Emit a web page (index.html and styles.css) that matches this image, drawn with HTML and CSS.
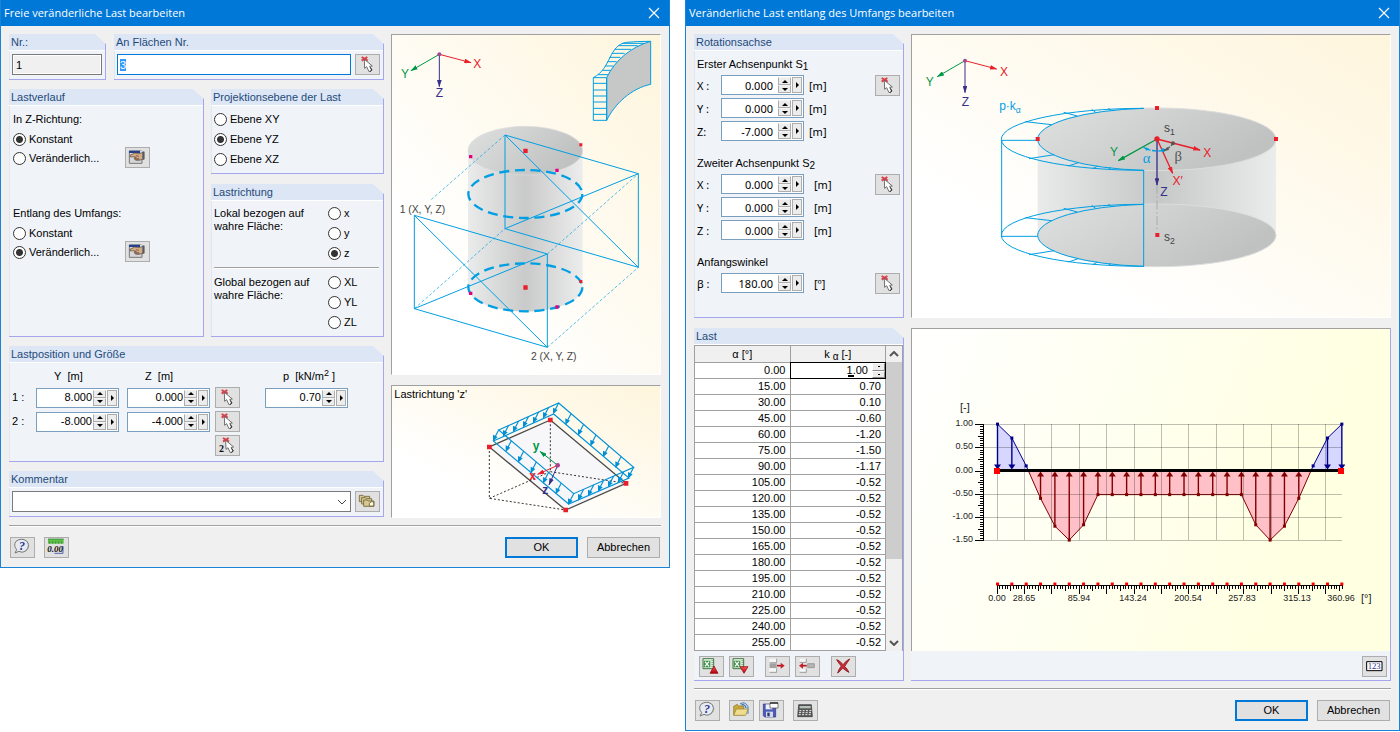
FILE: index.html
```html
<!DOCTYPE html>
<html lang="de">
<head>
<meta charset="utf-8">
<title>Lasten bearbeiten</title>
<link rel="stylesheet" href="styles.css">
</head>
<body>
<svg class="defs" aria-hidden="true">
  <defs>
    <marker id="m-red" viewBox="0 0 22 14" markerWidth="22" markerHeight="14" refX="20" refY="7" orient="auto" markerUnits="userSpaceOnUse"><path d="M0 0L22 7L0 14z" fill="#e8202a"/></marker>
    <marker id="m-green" viewBox="0 0 22 14" markerWidth="22" markerHeight="14" refX="20" refY="7" orient="auto" markerUnits="userSpaceOnUse"><path d="M0 0L22 7L0 14z" fill="#009846"/></marker>
    <marker id="m-navy" viewBox="0 0 22 14" markerWidth="22" markerHeight="14" refX="20" refY="7" orient="auto" markerUnits="userSpaceOnUse"><path d="M0 0L22 7L0 14z" fill="#36308b"/></marker>
    <marker id="m-gray" viewBox="0 0 22 14" markerWidth="16" markerHeight="12" refX="20" refY="7" orient="auto" markerUnits="userSpaceOnUse"><path d="M0 0L22 7L0 14z" fill="#555"/></marker>
    <marker id="m-blue" viewBox="0 0 22 14" markerWidth="16" markerHeight="12" refX="20" refY="7" orient="auto" markerUnits="userSpaceOnUse"><path d="M0 0L22 7L0 14z" fill="#009fe3"/></marker>
    <linearGradient id="g-body"><stop offset="0" stop-color="#e9eaea"/><stop offset=".5" stop-color="#c6c7c7"/><stop offset="1" stop-color="#ebecec"/></linearGradient>
    <linearGradient id="g-cap" x1="0" y1="0" x2="1" y2=".4"><stop offset="0" stop-color="#dfe0e0"/><stop offset="1" stop-color="#c0c1c1"/></linearGradient>
    <linearGradient id="g-red" x1="0" y1="0" x2="0" y2="1"><stop offset="0" stop-color="#f55"/><stop offset="1" stop-color="#b00010"/></linearGradient>

    <symbol id="i-pick" viewBox="0 0 75 63">
      <path d="M20 9L38 20M20 20L37 9" stroke="#d8404a" stroke-width="6"/>
      <path d="M28 16L29 43L35 38L42 53L50 49L44 37L52 36z" fill="#fff" stroke="#555" stroke-width="2.5"/>
      <path d="M46 40L51 48L45 53" fill="none" stroke="#333" stroke-width="3"/>
    </symbol>
    <symbol id="i-hand" viewBox="0 0 75 63">
      <path d="M13 12H51V49H13z" fill="#d4d6da" stroke="#777" stroke-width="3"/>
      <path d="M12 11H45V18H12z" fill="#27408b"/><path d="M45 11H52V18H45z" fill="#d8dde8"/>
      <path d="M15 25L29 18L42 20L57 15V36L46 39L31 39L27 33L34 31L27 29L16 30z" fill="#d3ab84" stroke="#5c4330" stroke-width="2"/>
      <path d="M29 35H42M32 39H44M33 26L42 28" stroke="#5c4330" stroke-width="2"/>
      <path d="M52 15L58 13V38L52 37z" fill="#555b66"/>
    </symbol>
    <symbol id="i-cards" viewBox="0 0 75 63" fill="#d6c896" stroke="#6f6334" stroke-width="2.5">
      <path d="M13 13H24L27 16H44V32H13z"/><path d="M20 20H31L34 23H50V39H20z"/><path d="M26 27H37L40 30H57V46H26z"/>
      <path d="M43 45V37L50 32L56 33V45z" fill="#fffbe6"/>
    </symbol>
    <symbol id="i-help" viewBox="0 0 75 63">
      <path d="M18 13Q34 1 50 12Q60 24 51 37Q40 50 27 43L15 48L20 38Q9 25 18 13z" fill="#e6eaf2" stroke="#777" stroke-width="3"/>
      <path d="M55 19Q60 33 46 43" fill="none" stroke="#999" stroke-width="3"/>
      <text x="27" y="40" class="icon-q">?</text>
    </symbol>
    <symbol id="i-units" viewBox="0 0 75 63">
      <path d="M12 6H59V20H12z" fill="#5cbf4a"/><path d="M12 6H59" stroke="#347a2b" stroke-width="2"/>
      <path d="M17 20V14M26 20V14M35 20V14M44 20V14M53 20V14" stroke="#2b6b22" stroke-width="2"/>
      <path d="M31 49H57V27" fill="none" stroke="#5664a8" stroke-width="3"/>
      <text x="10" y="45" class="icon-num">0.00</text>
    </symbol>
    <symbol id="i-xls" viewBox="0 0 75 63">
      <path d="M12 8H44V38H12z" fill="#eaf6e6" stroke="#3d7a43" stroke-width="3"/>
      <path d="M14 14H34V34H14z" fill="#3d8f4b"/><path d="M18 17L30 31M30 17L18 31" stroke="#fff" stroke-width="4"/>
      <path d="M37 14H43M37 20H43M37 26H43M37 32H43" stroke="#3d7a43" stroke-width="2"/>
    </symbol>
    <symbol id="i-xls-up" viewBox="0 0 75 63"><use href="#i-xls" width="75" height="63"/><path d="M45 30L57 52H33z" fill="url(#g-red)" stroke="#8b0000" stroke-width="2"/></symbol>
    <symbol id="i-xls-down" viewBox="0 0 75 63"><use href="#i-xls" width="75" height="63"/><path d="M45 52L57 32H33z" fill="url(#g-red)" stroke="#8b0000" stroke-width="2"/></symbol>
    <symbol id="i-row-in" viewBox="0 0 75 63">
      <path d="M13 8H35V21H13zM13 37H35V49H13z" fill="#f6f6f6"/><path d="M35 8V20H14M35 37V49H14" fill="none" stroke="#777" stroke-width="2"/>
      <path d="M14 22H35V36H14z" fill="#a2a2a2"/><path d="M36 29H49" stroke="#b8141c" stroke-width="5"/><path d="M47 20L59 29L47 38z" fill="#c4202a"/>
    </symbol>
    <symbol id="i-row-out" viewBox="0 0 75 63">
      <path d="M14 8H34V19H14zM14 38H34V49H14z" fill="#f6f6f6"/><path d="M34 8V19H14M34 38V49H14" fill="none" stroke="#777" stroke-width="2"/>
      <path d="M38 23H58V35H38z" fill="#b4b4b4" stroke="#888" stroke-width="2"/><path d="M22 29H35" stroke="#b8141c" stroke-width="5"/><path d="M24 20L12 29L24 38z" fill="#c4202a"/>
    </symbol>
    <symbol id="i-delete" viewBox="0 0 75 63"><path d="M17 11Q25 12 36 26Q46 13 56 9Q50 18 41 31Q49 39 54 49Q43 44 35 36Q28 45 20 51Q23 40 31 30Q23 22 17 11z" fill="#cf2a33" stroke="#8f2027" stroke-width="3"/></symbol>
    <symbol id="i-open" viewBox="0 0 75 63">
      <path d="M33 12Q48 2 57 20V42" fill="#c6dcf2" stroke="#4a78ad" stroke-width="3"/><path d="M37 15Q48 11 51 24" fill="none" stroke="#24558c" stroke-width="3"/>
      <path d="M14 19L25 13L29 18H44V45H14z" fill="#c9a93a" stroke="#8a7526" stroke-width="2"/><path d="M14 46L22 27H57L50 46z" fill="#f0dd8c" stroke="#94802c" stroke-width="2"/>
    </symbol>
    <symbol id="i-save" viewBox="0 0 75 63">
      <path d="M13 12H50V51H17L13 47z" fill="#4d5bb8" stroke="#28347f" stroke-width="2"/><path d="M20 13H40V28H20z" fill="#eef1fa"/><path d="M21 35H42V51H21z" fill="#d5d8e2"/><path d="M25 38H32V49H25z" fill="#28347f"/>
      <path d="M33 9H57V24H33z" fill="#fff" stroke="#444" stroke-width="2"/><path d="M33 9H57" stroke="#222" stroke-width="4"/>
    </symbol>
    <symbol id="i-calc" viewBox="0 0 75 63">
      <path d="M17 14H55L58 50H14z" fill="#555" stroke="#333" stroke-width="2"/><path d="M20 18H53V25H20z" fill="#b5c2b7"/>
      <path d="M19 32H55M18 38H55M17 44H56" stroke="#eee" stroke-width="3" stroke-dasharray="6 4"/>
    </symbol>
    <symbol id="i-123" viewBox="0 0 75 63"><path d="M14 17H60V44H14z" fill="#fff" stroke="#000" stroke-width="3"/><text x="17" y="40" class="icon-123">123</text></symbol>
    <symbol id="i-close" viewBox="0 0 12 12"><path d="M1 1L11 11M11 1L1 11" stroke="#fff" stroke-width="1.2"/></symbol>
    <g id="press"><path d="M0 0L-14 27" fill="none" stroke="#0091d5" stroke-width="3.5"/><path d="M-17 34L-17 14L-3 21z" fill="#0091d5"/></g>
  </defs>
</svg>

<main class="desk">
<section class="dialog" aria-labelledby="t1">
  <header class="titlebar"><h1 id="t1">Freie veränderliche Last bearbeiten</h1><button class="close" aria-label="Schließen"><svg><use href="#i-close"/></svg></button></header>
  <div class="content">
    <div class="cols cols-a">
      <div class="stack forms">
        <div class="row-nr">
          <section class="group"><h2><label for="nr">Nr.:</label></h2><div class="body line"><input id="nr" class="text readonly" value="1" readonly></div></section>
          <section class="group"><h2><label for="faces">An Flächen Nr.</label></h2><div class="body line"><input id="faces" class="text focus" value="3"><button class="tool" aria-label="Flächen wählen"><svg><use href="#i-pick"/></svg></button></div></section>
        </div>
        <div class="row-mid">
          <section class="group"><h2>Lastverlauf</h2>
            <div class="body course">
              <div class="choice">
                <p>In Z-Richtung:</p>
                <div class="radios"><label><input type="radio" name="zr" checked>Konstant</label><label><input type="radio" name="zr">Veränderlich...</label></div>
                <button class="tool" aria-label="Verlauf in Z bearbeiten"><svg><use href="#i-hand"/></svg></button>
              </div>
              <div class="choice">
                <p>Entlang des Umfangs:</p>
                <div class="radios"><label><input type="radio" name="um">Konstant</label><label><input type="radio" name="um" checked>Veränderlich...</label></div>
                <button class="tool" aria-label="Verlauf am Umfang bearbeiten"><svg><use href="#i-hand"/></svg></button>
              </div>
            </div>
          </section>
          <div class="stack">
            <section class="group"><h2>Projektionsebene der Last</h2>
              <div class="body radios plane"><label><input type="radio" name="eb">Ebene XY</label><label><input type="radio" name="eb" checked>Ebene YZ</label><label><input type="radio" name="eb">Ebene XZ</label></div>
            </section>
            <section class="group"><h2>Lastrichtung</h2>
              <div class="body direction">
                <p>Lokal bezogen auf<br>wahre Fläche:</p>
                <div class="radios plane"><label><input type="radio" name="ri">x</label><label><input type="radio" name="ri">y</label><label><input type="radio" name="ri" checked>z</label></div>
                <hr>
                <p>Global bezogen auf<br>wahre Fläche:</p>
                <div class="radios plane"><label><input type="radio" name="ri">XL</label><label><input type="radio" name="ri">YL</label><label><input type="radio" name="ri">ZL</label></div>
              </div>
            </section>
          </div>
        </div>
        <section class="group"><h2>Lastposition und Größe</h2>
          <div class="body position">
            <span></span><span class="unit-y">Y&nbsp; [m]</span><span class="unit-y">Z&nbsp; [m]</span><span></span><span class="unit-y">p&nbsp; [kN/m<sup>2</sup> ]</span>
            <span>1 :</span>
            <div class="num"><input aria-label="Y 1" value="8.000"><span class="spin"><button aria-label="mehr"></button><button aria-label="weniger"></button></span><button class="more" aria-label="Auswahl"></button></div>
            <div class="num"><input aria-label="Z 1" value="0.000"><span class="spin"><button aria-label="mehr"></button><button aria-label="weniger"></button></span><button class="more" aria-label="Auswahl"></button></div>
            <button class="tool" aria-label="Punkt 1 wählen"><svg><use href="#i-pick"/></svg></button>
            <div class="num"><input aria-label="p" value="0.70"><span class="spin"><button aria-label="mehr"></button><button aria-label="weniger"></button></span><button class="more" aria-label="Auswahl"></button></div>
            <span>2 :</span>
            <div class="num"><input aria-label="Y 2" value="-8.000"><span class="spin"><button aria-label="mehr"></button><button aria-label="weniger"></button></span><button class="more" aria-label="Auswahl"></button></div>
            <div class="num"><input aria-label="Z 2" value="-4.000"><span class="spin"><button aria-label="mehr"></button><button aria-label="weniger"></button></span><button class="more" aria-label="Auswahl"></button></div>
            <button class="tool" aria-label="Punkt 2 wählen"><svg><use href="#i-pick"/></svg></button>
            <span></span>
            <button class="tool both" aria-label="Zwei Punkte wählen"><svg viewBox="0 0 75 63"><text x="12" y="51" class="icon-two">2</text><use href="#i-pick" x="4" width="75" height="63"/></svg></button>
          </div>
        </section>
        <section class="group"><h2><label for="note">Kommentar</label></h2>
          <div class="body line"><select id="note" class="text combo"><option></option></select><button class="tool" aria-label="Kommentar wählen"><svg><use href="#i-cards"/></svg></button></div>
        </section>
      </div>
      <div class="stack">
        <svg class="picture" viewBox="21 15 804 1017" role="img" aria-label="Zylinder mit Projektionsebenen">
          <g class="axes">
            <path d="M163 73L258 98" stroke="#e8202a" marker-end="url(#m-red)"/><path d="M163 73L78 122" stroke="#009846" marker-end="url(#m-green)"/><path d="M163 73V170" stroke="#36308b" marker-end="url(#m-navy)"/>
            <circle cx="163" cy="73" r="6" fill="#a8468c"/>
            <text x="277" y="115" fill="#e8202a">X</text><text x="60" y="144" fill="#009846">Y</text><text x="163" y="202" fill="#36308b">Z</text>
          </g>
          <path d="M665 143C690 90 740 50 797 34V163C740 175 690 220 665 271z" fill="#c6c7c7"/>
          <path class="blue" d="M625 143H665V271H625zM625 143C680 115 670 45 725 37Q755 34 797 34V163C740 175 690 220 665 271V143C690 90 740 50 797 34M625 160H665M625 180H665M625 198H665M625 216H665M625 235H665M625 253H665M640 134H669M652 121H677M660 108H685M667 95H695M673 82H706M680 70H719M689 58H738M700 47H758M712 40H778"/>
          <path d="M249 362V772A172 73 0 0 0 593 772V362z" fill="url(#g-body)" opacity=".95"/>
          <ellipse cx="421" cy="362" rx="172" ry="73" fill="url(#g-cap)" stroke="#dcdddd" stroke-width="2"/>
          <path class="blue" d="M360 315L760 431V712L360 596zM360 315L760 712M760 431L360 596M88 556L487 672V952L88 836zM88 556L487 952M88 836L487 672"/>
          <path class="blue fine" stroke-dasharray="9 6" d="M360 315L135 512M88 836L360 596M487 672L760 431M487 952L760 712"/>
          <g class="ring"><ellipse cx="421" cy="492" rx="171" ry="72"/><ellipse cx="421" cy="772" rx="171" ry="72"/></g>
          <path d="M415 356h13v13h-13zM583 340h9v9h-9zM415 766h13v13h-13zM583 750h9v9h-9z" fill="#e8202a"/>
          <path d="M252 375h10v10h-10zM511 416h10v10h-10zM252 785h10v10h-10zM511 826h10v10h-10z" fill="#e6007e"/>
          <text class="caption" x="44" y="549">1 (X, Y, Z)</text><text class="caption" x="438" y="990">2 (X, Y, Z)</text>
        </svg>
        <svg class="picture" viewBox="21 33 804 393" role="img" aria-label="Lastrichtung z">
          <text class="label" x="28" y="69">Lastrichtung 'z'</text>
          <path d="M496 135L313 216L542 405L723 325z" fill="#f7f7f9" stroke="#4a4a4a" stroke-width="4"/>
          <path d="M313 216V370L542 405M313 370L496 290V135M496 290L723 325" fill="none" stroke="#333" stroke-width="3" stroke-dasharray="6 6"/>
          <path d="M341 165L521 84L746 277L566 356zM325 198L506 117L732 309L551 387z" fill="none" stroke="#0091d5" stroke-width="3.5"/>
          <use href="#press" x="341" y="165"/><use href="#press" x="371" y="151"/><use href="#press" x="401" y="138"/><use href="#press" x="431" y="124"/><use href="#press" x="461" y="111"/><use href="#press" x="491" y="97"/><use href="#press" x="521" y="84"/>
          <use href="#press" x="558" y="116"/><use href="#press" x="596" y="148"/><use href="#press" x="633" y="180"/><use href="#press" x="671" y="213"/><use href="#press" x="708" y="245"/><use href="#press" x="746" y="277"/>
          <use href="#press" x="379" y="197"/><use href="#press" x="416" y="229"/><use href="#press" x="454" y="261"/><use href="#press" x="491" y="292"/><use href="#press" x="529" y="324"/><use href="#press" x="566" y="356"/>
          <use href="#press" x="596" y="343"/><use href="#press" x="626" y="330"/><use href="#press" x="656" y="316"/><use href="#press" x="686" y="303"/><use href="#press" x="716" y="290"/>
          <g class="axes bold">
            <path d="M518 271L458 298" stroke="#e8202a" marker-end="url(#m-red)"/><path d="M518 271L465 229" stroke="#009846" marker-end="url(#m-green)"/><path d="M518 271L492 330" stroke="#36308b" marker-end="url(#m-navy)"/>
            <circle cx="518" cy="271" r="7" fill="#a8468c"/>
            <text x="453" y="226" fill="#009846">y</text><text x="443" y="315" fill="#e8202a">x</text><text x="481" y="357" fill="#36308b">z</text>
          </g>
          <path d="M489 128h14v14h-14zM306 209h14v14h-14zM535 398h14v14h-14zM716 318h14v14h-14z" fill="#e8202a"/>
        </svg>
      </div>
    </div>
    <footer class="actions"><button class="tool" aria-label="Hilfe"><svg><use href="#i-help"/></svg></button><button class="tool" aria-label="Einheiten"><svg><use href="#i-units"/></svg></button><button class="btn primary">OK</button><button class="btn">Abbrechen</button></footer>
  </div>
</section>

<section class="dialog" aria-labelledby="t2">
  <header class="titlebar"><h1 id="t2">Veränderliche Last entlang des Umfangs bearbeiten</h1><button class="close" aria-label="Schließen"><svg><use href="#i-close"/></svg></button></header>
  <div class="content">
    <div class="cols cols-b">
      <section class="group"><h2>Rotationsachse</h2>
        <div class="body axis">
          <div class="point">
            <h3>Erster Achsenpunkt S<sub>1</sub></h3>
            <label for="x1">X :</label><div class="num"><input id="x1" value="0.000"><span class="spin"><button aria-label="mehr"></button><button aria-label="weniger"></button></span><button class="more" aria-label="Auswahl"></button></div><span>[m]</span><button class="tool" aria-label="Punkt S1 wählen"><svg><use href="#i-pick"/></svg></button>
            <label for="y1">Y :</label><div class="num"><input id="y1" value="0.000"><span class="spin"><button aria-label="mehr"></button><button aria-label="weniger"></button></span><button class="more" aria-label="Auswahl"></button></div><span>[m]</span>
            <label for="z1">Z:</label><div class="num"><input id="z1" value="-7.000"><span class="spin"><button aria-label="mehr"></button><button aria-label="weniger"></button></span><button class="more" aria-label="Auswahl"></button></div><span>[m]</span>
          </div>
          <div class="point wide">
            <h3>Zweiter Achsenpunkt S<sub>2</sub></h3>
            <label for="x2">X :</label><div class="num"><input id="x2" value="0.000"><span class="spin"><button aria-label="mehr"></button><button aria-label="weniger"></button></span><button class="more" aria-label="Auswahl"></button></div><span>[m]</span><button class="tool" aria-label="Punkt S2 wählen"><svg><use href="#i-pick"/></svg></button>
            <label for="y2">Y :</label><div class="num"><input id="y2" value="0.000"><span class="spin"><button aria-label="mehr"></button><button aria-label="weniger"></button></span><button class="more" aria-label="Auswahl"></button></div><span>[m]</span>
            <label for="z2">Z :</label><div class="num"><input id="z2" value="0.000"><span class="spin"><button aria-label="mehr"></button><button aria-label="weniger"></button></span><button class="more" aria-label="Auswahl"></button></div><span>[m]</span>
          </div>
          <div class="point wide">
            <h3>Anfangswinkel</h3>
            <label for="be">β :</label><div class="num"><input id="be" value="180.00"><span class="spin"><button aria-label="mehr"></button><button aria-label="weniger"></button></span><button class="more" aria-label="Auswahl"></button></div><span>[º]</span><button class="tool" aria-label="Winkel wählen"><svg><use href="#i-pick"/></svg></button>
          </div>
        </div>
      </section>
      <svg class="picture" viewBox="21 15 1434 846" role="img" aria-label="Zylinder mit Last entlang des Umfangs">
        <g class="axes">
          <path d="M180 92L275 117" stroke="#e8202a" marker-end="url(#m-red)"/><path d="M180 92L97 140" stroke="#009846" marker-end="url(#m-green)"/><path d="M180 92V188" stroke="#36308b" marker-end="url(#m-navy)"/>
          <circle cx="180" cy="92" r="6" fill="#a8468c"/>
          <text x="297" y="137" fill="#e8202a">X</text><text x="74" y="167" fill="#009846">Y</text><text x="181" y="228" fill="#36308b">Z</text>
        </g>
        <path d="M398 328V616A358 94 0 0 0 1113 616V328z" fill="url(#g-body)"/>
        <ellipse cx="756" cy="616" rx="357" ry="94" fill="url(#g-cap)" stroke="#dcdddd" stroke-width="3"/>
        <ellipse cx="756" cy="328" rx="357" ry="94" fill="url(#g-cap)" stroke="#dcdddd" stroke-width="3"/>
        <g id="crown" class="blue">
          <path d="M716 235A427 93 0 0 0 716 421A358 94 0 0 1 398 328A358 94 0 0 1 716 235"/>
          <path d="M289 331H398M360 275L440 284M476 247L517 258M560 238L572 247M610 235L618 240M372 386L448 374M490 408L520 398M563 416L578 408M610 418L618 412"/>
        </g>
        <use href="#crown" y="288"/>
        <path class="blue" d="M290 330V618M716 420V710"/>
        <path d="M756 465V605" stroke="#aaa" stroke-width="3" stroke-dasharray="26 8 5 8"/>
        <g class="axes strong">
          <path d="M756 327L885 360" stroke="#e8202a" marker-end="url(#m-red)"/><path d="M756 327L803 430" stroke="#e8202a" marker-end="url(#m-red)"/><path d="M756 327L640 392" stroke="#009846" marker-end="url(#m-green)"/><path d="M756 327V465" stroke="#36308b" marker-end="url(#m-navy)"/>
          <path d="M774 361Q745 368 716 352" stroke="#009fe3" stroke-dasharray="14 5" marker-end="url(#m-blue)"/><circle cx="774" cy="361" r="6" fill="#009fe3"/>
          <path d="M804 340Q796 352 777 362" stroke="#555" stroke-dasharray="10 4" marker-end="url(#m-gray)"/><circle cx="804" cy="340" r="6" fill="#555"/>
          <circle cx="756" cy="327" r="8" fill="#e8202a"/>
          <text x="907" y="381" fill="#e8202a">X</text><text x="627" y="378" fill="#009846">Y</text><text x="777" y="499" fill="#36308b">Z</text><text x="818" y="465" fill="#e8202a">X′</text>
          <text class="greek" x="725" y="399" fill="#009fe3">α</text><text class="greek" x="820" y="394" fill="#555">β</text>
          <text x="793" y="306" fill="#444">s<tspan dy="8" class="sub">1</tspan></text><text x="793" y="633" fill="#444">s<tspan dy="8" class="sub">2</tspan></text>
          <text x="315" y="240" fill="#009fe3">p·k<tspan dy="8" class="sub">α</tspan></text>
        </g>
        <path d="M750 228h12v12h-12zM392 321h12v12h-12zM1107 321h12v12h-12zM751 609h12v12h-12z" fill="#e8202a"/>
      </svg>
      <section class="group"><h2>Last</h2>
        <div class="grid-wrap">
          <table class="loads">
            <thead><tr><th>α [°]</th><th>k <sub>α</sub> [-]</th></tr></thead>
            <tbody>
              <tr><td>0.00</td><td class="edit"><div class="editor"><input aria-label="k alpha" value="1.00"><i class="caret"></i><span class="mini"><button aria-label="mehr"></button><button aria-label="weniger"></button></span></div></td></tr>
              <tr><td>15.00</td><td>0.70</td></tr><tr><td>30.00</td><td>0.10</td></tr><tr><td>45.00</td><td>-0.60</td></tr>
              <tr><td>60.00</td><td>-1.20</td></tr><tr><td>75.00</td><td>-1.50</td></tr><tr><td>90.00</td><td>-1.17</td></tr>
              <tr><td>105.00</td><td>-0.52</td></tr><tr><td>120.00</td><td>-0.52</td></tr><tr><td>135.00</td><td>-0.52</td></tr>
              <tr><td>150.00</td><td>-0.52</td></tr><tr><td>165.00</td><td>-0.52</td></tr><tr><td>180.00</td><td>-0.52</td></tr>
              <tr><td>195.00</td><td>-0.52</td></tr><tr><td>210.00</td><td>-0.52</td></tr><tr><td>225.00</td><td>-0.52</td></tr>
              <tr><td>240.00</td><td>-0.52</td></tr><tr><td>255.00</td><td>-0.52</td></tr>
            </tbody>
          </table>
          <div class="scroll">
            <button aria-label="nach oben"><svg viewBox="0 0 10 6"><path d="M1 5L5 1L9 5"/></svg></button>
            <div class="track"><div class="thumb"></div></div>
            <button aria-label="nach unten"><svg viewBox="0 0 10 6"><path d="M1 1L5 5L9 1"/></svg></button>
          </div>
        </div>
        <div class="strip">
          <button class="tool" aria-label="Nach Excel exportieren"><svg><use href="#i-xls-up"/></svg></button><button class="tool" aria-label="Aus Excel importieren"><svg><use href="#i-xls-down"/></svg></button>
          <button class="tool apart" aria-label="Zeile einfügen"><svg><use href="#i-row-in"/></svg></button><button class="tool" aria-label="Zeile entfernen"><svg><use href="#i-row-out"/></svg></button>
          <button class="tool apart" aria-label="Alles löschen"><svg><use href="#i-delete"/></svg></button>
        </div>
      </section>
      <section class="graph">
        <svg id="chart" class="picture plot" viewBox="912 329 478 322" role="img" aria-label="Lastverlauf entlang des Umfangs"></svg>
        <div class="strip end"><button class="tool" aria-label="Werte anzeigen"><svg><use href="#i-123"/></svg></button></div>
      </section>
    </div>
    <footer class="actions dense"><button class="tool" aria-label="Hilfe"><svg><use href="#i-help"/></svg></button><button class="tool" aria-label="Öffnen"><svg><use href="#i-open"/></svg></button><button class="tool" aria-label="Speichern"><svg><use href="#i-save"/></svg></button><button class="tool" aria-label="Rechner"><svg><use href="#i-calc"/></svg></button><button class="btn primary">OK</button><button class="btn">Abbrechen</button></footer>
  </div>
</section>
</main>
<script src="chart.js"></script>
</body>
</html>
```
FILE: styles.css
```css
* { box-sizing: border-box; }
body { margin: 0; background: #fff; color: #000; font: 11px/13px "Liberation Sans", Arial, sans-serif; }
button, input, select { font: inherit; color: inherit; margin: 0; padding: 0; border-radius: 0; }
h1, h2, h3, p { margin: 0; font: inherit; }
.defs { position: absolute; width: 0; height: 0; }

.desk { display: grid; grid-template-columns: 670fr 715fr; gap: 15px; align-items: start; }
.dialog { background: #f0f0f0; border: 1px solid #1883d7; border-top: 0; min-width: 0; }
.titlebar { display: flex; align-items: center; justify-content: space-between; height: 26px; padding: 0 9px 0 3px; background: #0078d7; color: #fff; }
.titlebar h1 { font: 11px/16px "Open Sans", "Noto Sans", sans-serif; }
.close { width: 12px; height: 12px; border: 0; background: none; display: flex; }
.close svg { width: 12px; height: 12px; }
.content { padding: 8px 8px 9px; }

.cols { display: grid; column-gap: 7px; row-gap: 10px; }
.cols-a { grid-template-columns: 375fr 270fr; }
.cols-b { grid-template-columns: 210px 1fr; }
.stack { display: flex; flex-direction: column; gap: 10px; min-width: 0; }
.forms { gap: 9px; }
.row-nr { display: grid; grid-template-columns: 97fr 270fr; gap: 8px; }
.row-mid { display: grid; grid-template-columns: 195fr 173fr; gap: 7px; }

.group { display: flex; flex-direction: column; min-width: 0; background: #f0f4f9; border: solid #a6a6ef; border-width: 0 1px 1px 0; clip-path: polygon(0 0, calc(100% - 11px) 0, 100% 10px, 100% 100%, 0 100%); }
.group > h2 { height: 17px; padding: 2px 2px 0; background: #dce6f4; border-bottom: 1px solid #fff; color: #1f4a7b; }
.body { border-left: 1px solid #dce6f4; flex: 1; }
.line { display: flex; align-items: flex-start; gap: 4px; padding: 3px 3px 4px 2px; }
.text { flex: 1; min-width: 0; height: 21px; padding: 0 3px; background: #fff; border: 1px solid #7a7a7a; }
.readonly { background: #f0f0f0; box-shadow: inset 0 0 0 1px #fff; }
.focus { border-color: #0078d7; outline: none; padding: 0 2px; }
.focus::selection { background: #3399ff; color: #fff; }
.combo { appearance: none; background: #fff url("data:image/svg+xml,%3Csvg xmlns='http://www.w3.org/2000/svg' width='10' height='6'%3E%3Cpath d='M1 1L5 5L9 1' fill='none' stroke='%23444'/%3E%3C/svg%3E") no-repeat right 3px center; }

.tool { flex: none; width: 25px; height: 21px; background: #e1e1e1; border: 1px solid #adadad; display: flex; }
.tool svg { width: 25px; height: 21px; margin: -1px; flex: none; }
.icon-q { font: italic bold 36px "Liberation Serif", serif; fill: #27348b; }
.icon-num { font: italic bold 27px "Liberation Serif", serif; fill: #111; }
.icon-two { font: bold 30px "Liberation Serif", serif; fill: #111; }
.icon-123 { font: 26px "Liberation Serif", serif; fill: #27348b; }

.radios { display: flex; flex-direction: column; }
.radios label { display: flex; align-items: center; gap: 3px; height: 19px; }
.plane { gap: 1px; }
.group > .plane { padding: 4px 2px; }
input[type=radio] { appearance: none; width: 13px; height: 13px; border: 1px solid #333; border-radius: 50%; background: #fff; }
input[type=radio]:checked { background: radial-gradient(circle, #333 3px, #fff 4px); }
.course { padding: 7px 2px 7px 3px; }
.choice { display: grid; grid-template-columns: 112px auto; justify-content: start; row-gap: 4px; align-items: end; min-height: 94px; align-content: start; }
.choice p { grid-column: 1 / -1; }
.direction { display: grid; grid-template-columns: 1fr 51px; padding: 3px 4px 4px 2px; }
.direction p { padding-top: 3px; }
.direction hr { grid-column: 1 / -1; width: 100%; margin: 4px 0; border: solid; border-color: #a0a0a0 transparent #fff; border-width: 1px 0; }

.position { display: grid; grid-template-columns: 24px 91px 88px 50px 83px; row-gap: 3px; align-items: center; padding: 5px 2px; }
.unit-y { padding-left: 18px; height: 16px; line-height: 16px; white-space: nowrap; }
sup { font-size: 9px; line-height: 0; vertical-align: 4px; }
.both { grid-column: 4; }
.num { display: flex; width: 83px; height: 20px; padding: 1px; gap: 1px; background: #fff; border: 1px solid #7a9ebd; }
.num input { flex: 1; min-width: 0; border: 0; background: none; text-align: right; }
.num button, .mini button { border: 1px solid #adadad; background: #ececec; display: flex; align-items: center; justify-content: center; min-height: 0; }
.spin { display: flex; flex-direction: column; width: 13px; }
.spin button { flex: 1; width: 13px; border-top-color: #f4f4f4; }
.spin button::before { content: ""; border: solid transparent; border-width: 0 3px 3px; border-bottom-color: #000; }
.spin button:last-child::before { border-width: 3px 3px 0; border-top-color: #000; }
.num .more { width: 10px; }
.more::before { content: ""; border: solid transparent; border-width: 3px 0 3px 3px; border-left-color: #000; }

.axis { padding: 5px 3px 22px 2px; display: flex; flex-direction: column; gap: 14px; }
.point { display: grid; grid-template-columns: 24px 83px 1fr 25px; row-gap: 3px; align-items: center; font-family: "Noto Sans", "Open Sans", sans-serif; }
.point h3 { grid-column: 1 / -1; height: 16px; line-height: 16px; font-family: "Liberation Sans", Arial, sans-serif; }
.point label { grid-column: 1; }
.point span:not(.spin) { padding-left: 5px; }
.point.wide span:not(.spin) { padding-left: 10px; }
.point .num input { padding-right: 4px; }
.point .tool { margin-bottom: -1px; }
sub { font-size: 10px; line-height: 0; vertical-align: -2px; }

.picture { display: block; width: 100%; height: auto; border: 1px solid; border-color: #a0a0a0 #fff #fff #a0a0a0; background: linear-gradient(to top right, #fff 25%, #fef5dc); align-self: start; }
.plot { background: linear-gradient(110deg, #fff, #ffffe1 80%); border-bottom: 0; border-right: 0; }
.picture text { font-family: "Liberation Sans", Arial, sans-serif; }
.axes { fill: none; stroke-width: 3; }
.axes text { font-size: 36px; text-anchor: middle; stroke: none; }
.axes.bold text { font-weight: bold; }
.axes.strong { stroke-width: 4; }
.axes.strong text.greek { font: 44px "Liberation Serif", serif; }
.axes .sub { font-size: 26px; }
.blue { fill: none; stroke: #009fe3; stroke-width: 3; }
.fine { stroke-width: 2; }
.ring { fill: none; stroke: #009fe3; stroke-width: 7; stroke-dasharray: 30 17; }
.caption { font-size: 31px; fill: #444; }
.label { font-size: 33px; }

.grid-wrap { display: grid; grid-template-columns: 1fr 17px; }
.loads { width: 100%; border-collapse: collapse; table-layout: fixed; background: #fff; }
.loads th { width: 50%; height: 17px; padding: 0; font-weight: normal; background: #f0f0f0; border: 1px solid #a0a0a0; }
.loads td { height: 16px; padding: 0 4px; line-height: 15px; text-align: right; border: 1px solid #a0a0a0; }
.loads td.edit { padding: 0; }
.editor { position: relative; display: flex; height: 15px; outline: 1px solid #000; }
.editor input { flex: 1; min-width: 0; border: 0; padding-right: 4px; text-align: right; background: #fff; }
.caret { position: absolute; right: 31px; bottom: 1px; width: 6px; height: 2px; background: #000; }
.mini { display: flex; flex-direction: column; width: 13px; }
.mini button { flex: 1; font-size: 0; border-color: #fff #888 #888 #fff; }
.mini button::before { content: ""; width: 2px; height: 1px; background: #000; }
.scroll { display: flex; flex-direction: column; background: #f0f0f0; border: solid #a0a0a0; border-width: 1px 1px 0 0; }
.scroll button { height: 16px; border: 0; background: none; display: flex; align-items: center; justify-content: center; }
.scroll svg { width: 10px; height: 6px; fill: none; stroke: #555; stroke-width: 2; }
.track { flex: 1; }
.thumb { height: 72%; background: #cdcdcd; }
.strip { display: flex; gap: 5px; padding: 5px 5px 3px; background: #f0f4f9; }
.strip .apart { margin-left: 6px; }
.graph { border: solid #a6a6ef; border-width: 0 1px 1px 0; background: #f0f4f9; min-width: 0; }
.end { justify-content: flex-end; padding-right: 3px; }

.actions { display: flex; gap: 9px; margin-top: 7px; padding: 11px 1px 0; border-top: 1px solid #a0a0a0; box-shadow: inset 0 1px #fff; }
.actions .tool:nth-child(2) { margin-left: 0; }
.btn { width: 73px; height: 21px; background: #e1e1e1; border: 1px solid #adadad; }
.primary { border: 2px solid #0078d7; margin-left: auto; }
.dense .tool:nth-child(3) { margin-left: -4px; }

.tick { stroke: #000; }
.gridline { stroke: #000; stroke-opacity: .25; }
.axis-text { font-size: 9px; fill: #222; }
.unit-text { font-size: 11px; fill: #222; }
```
FILE: chart.js
```
const chart = document.getElementById("chart");
const values = [1, .7, .1, -.6, -1.2, -1.5, -1.17,
  -.52, -.52, -.52, -.52, -.52, -.52, -.52, -.52, -.52, -.52, -.52,
  -1.17, -1.5, -1.2, -.6, .1, .7, 1];
const X = a => 997.5 + a * 0.9565;
const Y = v => 470.5 - v * 46.4;
const NAVY = "#00008b", MAROON = "#800000";

function add(tag, attrs, text) {
  const el = document.createElementNS("http://www.w3.org/2000/svg", tag);
  for (const k in attrs) el.setAttribute(k, attrs[k]);
  if (text !== undefined) el.textContent = text;
  chart.appendChild(el);
}
function path(d, attrs) { add("path", Object.assign({ d, fill: "none" }, attrs)); }
function square(x, y, s, fill) { add("rect", { x: x - s / 2, y: y - s / 2, width: s, height: s, fill }); }

const points = values.map((v, i) => [i * 15, v]);
const zeroA = 32.14, zeroB = 327.86;
function area(list, color, fill) {
  const line = list.map(([a, v]) => X(a) + " " + Y(v)).join("L");
  path("M" + X(list[0][0]) + " " + Y(0) + "L" + line + "L" + X(list[list.length - 1][0]) + " " + Y(0) + "z", { fill });
  path("M" + line, { stroke: color });
}
area([...points.slice(0, 3), [zeroA, 0]], NAVY, "#d6d6ff");
area([[zeroA, 0], ...points.slice(3, 22), [zeroB, 0]], MAROON, "#ffc0c8");
area([[zeroB, 0], ...points.slice(22)], NAVY, "#d6d6ff");

let grid = "";
for (let i = 0; i <= 12; i++) grid += `M${Math.round(X(i * 28.65)) - .5} 424V540`;
[1, .5, -.5, -1, -1.5].forEach(v => { grid += `M984 ${Math.round(Y(v)) + .5}H1342`; });
path(grid, { class: "gridline" });

points.forEach(([a, v]) => {
  const color = v > 0 ? NAVY : MAROON, x = X(a), s = v > 0 ? -1 : 1;
  if (Math.abs(v) > .2) {
    path(`M${x} ${Y(v)}V${Y(0) + s * 3}`, { stroke: color, "stroke-width": 1.4 });
    path(`M${x} ${Y(0) + s}l-3.5 ${s * 5}h7z`, { fill: color });
  }
  square(x, Y(v), 3, color);
});
path("M997 470.5H1342", { stroke: "#000", "stroke-width": 3 });
square(997, 471, 6, "#f00");
square(1341, 471, 6, "#f00");

let ticks = "M983.5 424V541M997 585.5H1343";
for (let i = 0; i <= 50; i++) {
  const y = Y(1 - i * .05), n = i % 10 === 0 ? 9 : i % 5 === 0 ? 6 : 4;
  ticks += `M984 ${Math.round(y) + .5}h${-n}`;
}
for (let i = 0; i <= 126; i++) {
  const n = i % 10 === 0 ? 9 : i % 5 === 0 ? 6 : 4;
  ticks += `M${Math.round(X(i * 2.865)) - .5} 585v${n}`;
}
path(ticks, { class: "tick" });
points.forEach(([a]) => square(X(a), 584, 3, "#f00"));

[1, .5, 0, -.5, -1, -1.5].forEach(v =>
  add("text", { x: 973, y: Y(v) + 2, "text-anchor": "end", class: "axis-text" }, v.toFixed(2)));
[["0.00", 997], ["28.65", 1024], ["85.94", 1079], ["143.24", 1133], ["200.54", 1188],
 ["257.83", 1242], ["315.13", 1297], ["360.96", 1341]].forEach(([t, x]) =>
  add("text", { x, y: 601, "text-anchor": "middle", class: "axis-text" }, t));
add("text", { x: 960, y: 411, class: "unit-text" }, "[-]");
add("text", { x: 1361, y: 602, class: "unit-text" }, "[°]");

const faces = document.getElementById("faces");
faces.focus({ preventScroll: true });
faces.select();
```
